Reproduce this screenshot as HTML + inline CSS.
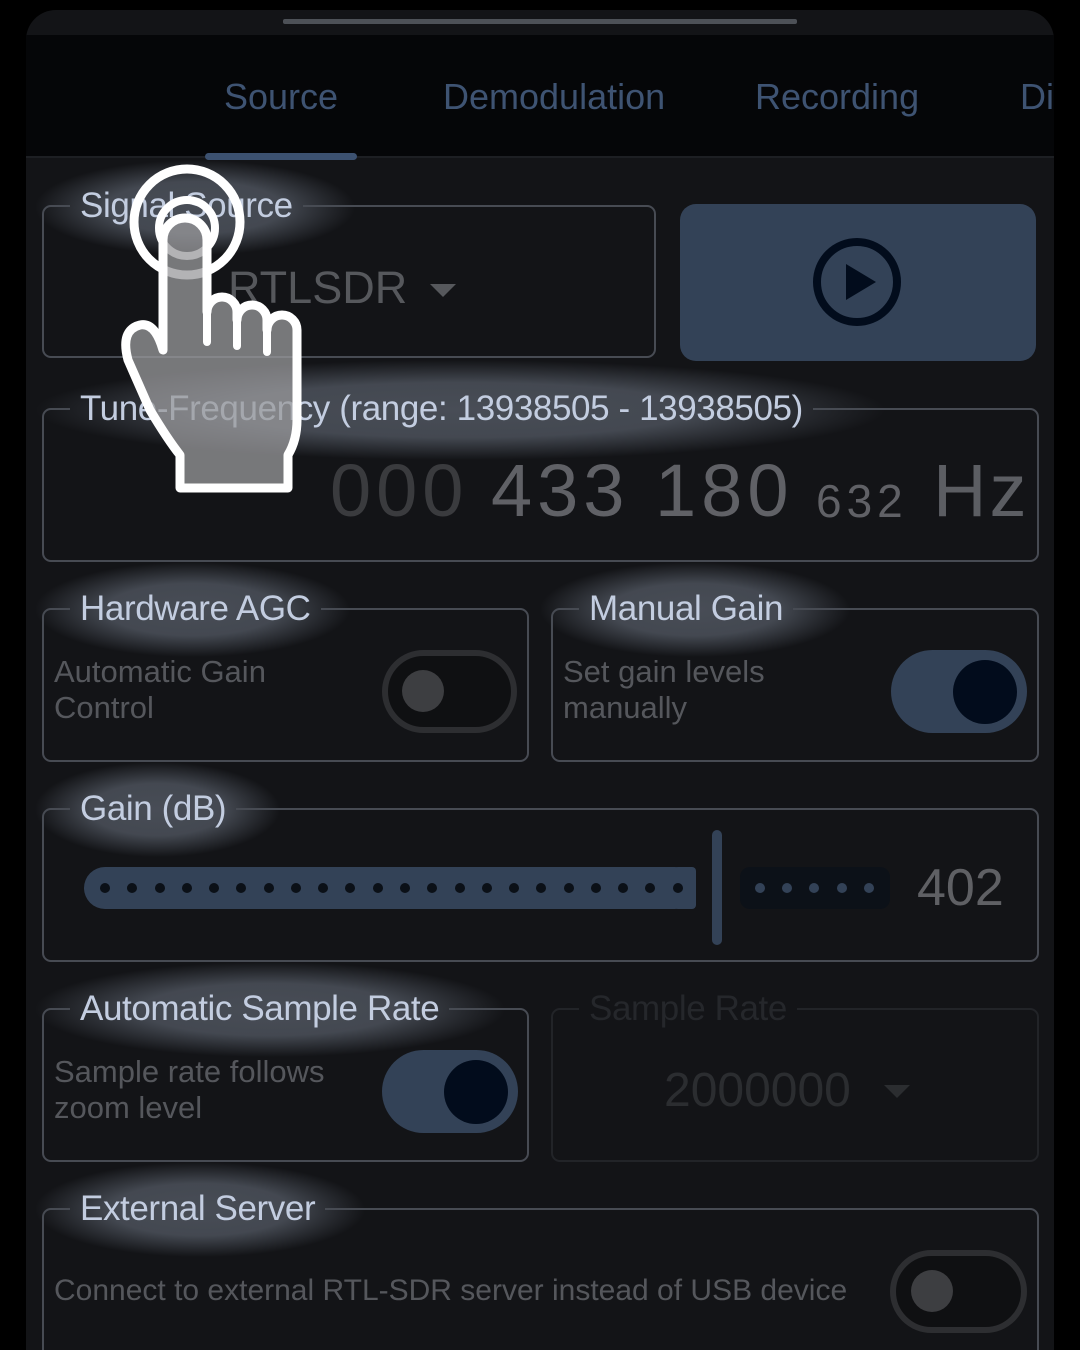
<!DOCTYPE html>
<html><head><meta charset="utf-8"><style>
*{margin:0;padding:0;box-sizing:border-box}
html,body{width:1080px;height:1350px;overflow:hidden}
body{background:#000;position:relative;font-family:"Liberation Sans","DejaVu Sans",sans-serif}
.a{position:absolute}
.panel{left:26px;top:10px;width:1028px;height:1340px;background:#131417;border-radius:30px 30px 0 0}
.tabbar{left:26px;top:35px;width:1028px;height:123px;background:#050608;border-bottom:2px solid #1d1f23}
.tab{top:76px;font-size:36px;color:#3e5372;white-space:nowrap}
.glow{background:radial-gradient(ellipse closest-side,rgba(72,77,86,1) 0%,rgba(70,75,84,.95) 55%,rgba(60,64,72,0) 100%)}
fieldset{position:absolute;border:2px solid #474b53;border-radius:9px;padding:0;margin:0}
fieldset.dis{border-color:#222428}
legend{font-size:35px;letter-spacing:-0.4px;line-height:42px;color:#c3cde0;margin-left:26px;padding:0 10px}
fieldset.dis legend{color:#25272b}
.txt{font-size:31px;color:#55575c;line-height:36px}
.tg{border-radius:42px}
</style></head><body>
<div class="a panel"></div>
<div class="a" style="left:283px;top:19px;width:514px;height:5px;background:#4d5157;border-radius:2px"></div>
<div class="a tabbar"></div>
<div class="a tab" style="left:224px">Source</div>
<div class="a tab" style="left:443px">Demodulation</div>
<div class="a tab" style="left:755px">Recording</div>
<div class="a tab" style="left:1020px">Di</div>
<div class="a" style="left:205px;top:153px;width:152px;height:7px;background:#3c5170;border-radius:4px"></div>

<div class="a glow" style="left:35px;top:160px;width:320px;height:95px"></div>
<div class="a glow" style="left:35px;top:360px;width:850px;height:100px"></div>
<div class="a glow" style="left:35px;top:562px;width:315px;height:95px"></div>
<div class="a glow" style="left:540px;top:562px;width:310px;height:95px"></div>
<div class="a glow" style="left:35px;top:762px;width:245px;height:95px"></div>
<div class="a glow" style="left:35px;top:962px;width:470px;height:95px"></div>
<div class="a glow" style="left:35px;top:1162px;width:330px;height:95px"></div>

<fieldset style="left:42px;top:185px;width:614px;height:173px"><legend>Signal Source</legend></fieldset>
<div class="a" style="left:228px;top:262px;font-size:45px;color:#56585c">RTLSDR</div>
<div class="a" style="left:430px;top:284px;width:0;height:0;border-left:13px solid transparent;border-right:13px solid transparent;border-top:13px solid #56585c"></div>

<div class="a" style="left:680px;top:204px;width:356px;height:157px;background:#334257;border-radius:16px"></div>
<svg class="a" style="left:812px;top:237px" width="90" height="90" viewBox="0 0 90 90"><circle cx="45" cy="45" r="40" fill="none" stroke="#020c1c" stroke-width="8"/><path d="M34 27 L64 45 L34 63 Z" fill="#020c1c"/></svg>

<fieldset style="left:42px;top:388px;width:997px;height:174px"><legend>Tune-Frequency (range: 13938505 - 13938505)</legend></fieldset>
<div class="a" style="left:330px;top:448px;font-size:74px;letter-spacing:5px;color:#3a3b3e;white-space:nowrap">000</div>
<div class="a" style="left:491px;top:448px;font-size:74px;letter-spacing:5px;color:#606166;white-space:nowrap">433 180</div>
<div class="a" style="left:816px;top:474px;font-size:46px;letter-spacing:5px;color:#606166">632</div>
<div class="a" style="left:933px;top:448px;font-size:74px;letter-spacing:3px;color:#5c5e63">Hz</div>

<fieldset style="left:42px;top:588px;width:487px;height:174px"><legend>Hardware AGC</legend></fieldset>
<div class="a txt" style="left:54px;top:654px">Automatic Gain<br>Control</div>
<div class="a tg" style="left:382px;top:650px;width:135px;height:83px;background:#0f1012;border:6px solid #2d2e31"></div>
<div class="a" style="left:402px;top:670px;width:42px;height:42px;border-radius:50%;background:#3d3e41"></div>

<fieldset style="left:551px;top:588px;width:488px;height:174px"><legend>Manual Gain</legend></fieldset>
<div class="a txt" style="left:563px;top:654px">Set gain levels<br>manually</div>
<div class="a tg" style="left:891px;top:650px;width:136px;height:83px;background:#334257"></div>
<div class="a" style="left:953px;top:660px;width:64px;height:64px;border-radius:50%;background:#020c1c"></div>

<fieldset style="left:42px;top:788px;width:997px;height:174px"><legend>Gain (dB)</legend></fieldset>
<svg class="a" style="left:84px;top:828px" width="820" height="120">
<rect x="0" y="39" width="612" height="42" rx="21" fill="#334257"/>
<rect x="590" y="39" width="22" height="42" rx="4" fill="#334257"/>
<g fill="#0b1017">
<circle cx="21" cy="60" r="5"/><circle cx="48" cy="60" r="5"/><circle cx="76" cy="60" r="5"/><circle cx="103" cy="60" r="5"/><circle cx="130" cy="60" r="5"/><circle cx="157" cy="60" r="5"/><circle cx="185" cy="60" r="5"/><circle cx="212" cy="60" r="5"/><circle cx="239" cy="60" r="5"/><circle cx="266" cy="60" r="5"/><circle cx="294" cy="60" r="5"/><circle cx="321" cy="60" r="5"/><circle cx="348" cy="60" r="5"/><circle cx="376" cy="60" r="5"/><circle cx="403" cy="60" r="5"/><circle cx="430" cy="60" r="5"/><circle cx="457" cy="60" r="5"/><circle cx="485" cy="60" r="5"/><circle cx="512" cy="60" r="5"/><circle cx="539" cy="60" r="5"/><circle cx="566" cy="60" r="5"/><circle cx="594" cy="60" r="5"/>
</g>
<rect x="628" y="2" width="10" height="115" rx="5" fill="#334257"/>
<rect x="656" y="39" width="150" height="42" rx="10" fill="#0c1118"/>
<g fill="#334257"><circle cx="676" cy="60" r="5"/><circle cx="703" cy="60" r="5"/><circle cx="730" cy="60" r="5"/><circle cx="758" cy="60" r="5"/><circle cx="785" cy="60" r="5"/></g>
</svg>
<div class="a" style="left:917px;top:858px;font-size:52px;color:#5f6064">402</div>

<fieldset style="left:42px;top:988px;width:487px;height:174px"><legend>Automatic Sample Rate</legend></fieldset>
<div class="a txt" style="left:54px;top:1054px;line-height:36px">Sample rate follows<br>zoom level</div>
<div class="a tg" style="left:382px;top:1050px;width:136px;height:83px;background:#334257"></div>
<div class="a" style="left:444px;top:1060px;width:64px;height:64px;border-radius:50%;background:#020c1c"></div>

<fieldset class="dis" style="left:551px;top:988px;width:488px;height:174px"><legend>Sample Rate</legend></fieldset>
<div class="a" style="left:664px;top:1063px;font-size:48px;color:#2b2d30">2000000</div>
<div class="a" style="left:884px;top:1085px;width:0;height:0;border-left:13px solid transparent;border-right:13px solid transparent;border-top:13px solid #2b2d30"></div>

<fieldset style="left:42px;top:1188px;width:997px;height:220px"><legend>External Server</legend></fieldset>
<div class="a txt" style="left:54px;top:1273px;font-size:30px">Connect to external RTL-SDR server instead of USB device</div>
<div class="a tg" style="left:890px;top:1250px;width:137px;height:83px;background:#0f1012;border:6px solid #2d2e31"></div>
<div class="a" style="left:911px;top:1270px;width:42px;height:42px;border-radius:50%;background:#3d3e41"></div>

<svg class="a" style="left:0;top:0" width="400" height="520" viewBox="0 0 400 520">
<circle cx="187" cy="222" r="53" fill="none" stroke="#fff" stroke-width="9"/>
<circle cx="187" cy="228" r="28" fill="none" stroke="#fff" stroke-width="8"/>
<path d="M163,240 A22,22 0 0 1 207,240 L207,312 A15,15 0 0 1 237,312 L237,320 A15,15 0 0 1 267,320 L267,330 A15,15 0 0 1 297,330 L297,420 Q297,440 288,455 L288,488 L180,488 L180,455 Q168,440 150,410 L128,360 Q120,330 140,325 Q155,322 163,350 Z" fill="#9a9a9c" fill-opacity="0.75" stroke="#fff" stroke-width="9" stroke-linejoin="round"/>
<path d="M207,312 L207,342 M237,320 L237,346 M267,330 L267,352" stroke="#fff" stroke-width="8" stroke-linecap="round"/>
</svg>
</body></html>
